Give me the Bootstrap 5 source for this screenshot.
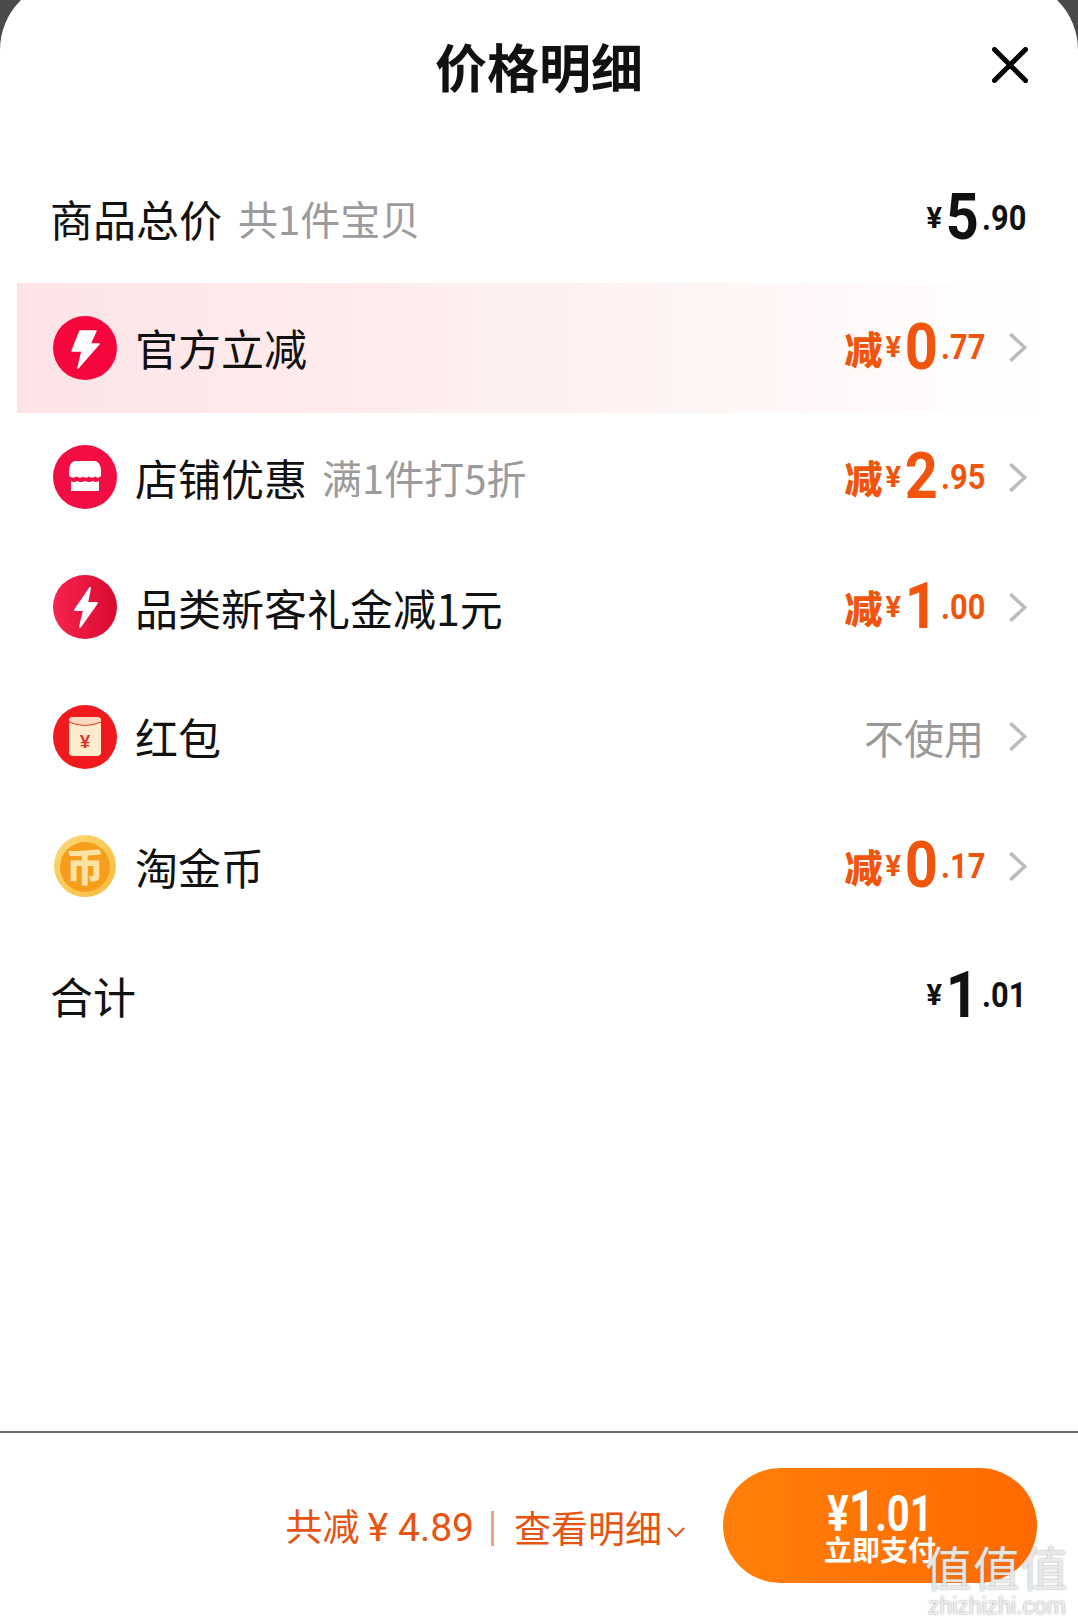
<!DOCTYPE html>
<html lang="zh-CN">
<head>
    <meta charset="UTF-8">
    <meta name="viewport" content="width=device-width, initial-scale=1.0">
    <title>价格明细</title>
    <link href="https://cdn.jsdelivr.net/npm/bootstrap@5.3.0/dist/css/bootstrap.min.css" rel="stylesheet">
    <script src="https://cdn.jsdelivr.net/npm/bootstrap@5.3.0/dist/js/bootstrap.bundle.min.js"></script>
    <style>
        html, body {
            height: 100%;
            overflow: hidden;
        }
        body {
            background-color: #4a4a4a;
            font-family: "Noto Sans CJK SC", "Liberation Sans", sans-serif;
            color: #111;
        }
        .sheet {
            position: relative;
            height: 1643px;
            margin-top: -20px;
            padding-top: 20px;
            background: #fff;
            border-radius: 70px 70px 0 0;
            overflow: hidden;
        }
        .sheet-head {
            height: 153.500px;
            padding: 40px 50px 0;
        }
        .sheet-title {
            font-size: 52px;
            font-weight: 700;
            line-height: 1;
            margin: 0;
        }
        .close-x {
            position: absolute;
            right: 50px;
            top: 67px;
            width: 36px;
            height: 36px;
        }
        .price-row {
            height: 129.600px;
            padding: 0 51px 0 53px;
            font-size: 43px;
            line-height: 1;
        }
        .price-row.is-hot {
            margin-left: 17px;
            padding-left: 36px;
            background: linear-gradient(90deg, #fde4e6 0%, #feeff0 45%, #fff7f7 72%, #fff 96%);
        }
        .price-row.is-plain {
            padding: 0 52px 0 50px;
        }
        .row-label { margin-left: 18px; }
        .row-note {
            color: #9b9b9b;
            font-size: 40px;
            margin-left: 15px;
        }
        .is-plain .row-note { margin-left: 16px; }
        .ico { width: 64px; height: 64px; flex: none; }
        .amt {
            font-family: Roboto, "Liberation Sans", sans-serif;
            font-weight: 700;
            line-height: 1;
            white-space: nowrap;
        }
        .amt-off { color: #f0540d; margin-right: 23px; }
        .amt-jian {
            font-family: "Noto Sans CJK SC", sans-serif;
            font-size: 38px;
            font-weight: 900;
            margin-right: 3px;
        }
        .amt-yen { font-size: 29px; margin-right: 3px; }
        .amt-big {
            display: inline-block;
            font-size: 64px;
            margin-left: -3px;
            transform: scaleX(.9);
            transform-origin: 100% 50%;
        }
        .amt-dec {
            display: inline-block;
            font-size: 35px;
            margin-left: -3px;
            transform: scaleX(.88);
            transform-origin: 100% 50%;
        }
        .no-use {
            color: #999;
            font-size: 40px;
            margin-right: 24px;
        }
        .chev { width: 19px; height: 33px; flex: none; }
        .sheet-foot {
            position: absolute;
            left: 0;
            right: 0;
            top: 1451px;
            height: 172px;
            border-top: 2px solid #6b6b6b;
            padding: 35px 41px 0 0;
            color: #e8530f;
            font-size: 37px;
        }
        .foot-sum {
            height: 115px;
            padding-top: 5px;
        }
        .foot-sep {
            width: 3px;
            height: 35px;
            background: #eea183;
            margin: 0 20px 0 17px;
        }
        .foot-num { font-family: Roboto, "Liberation Sans", sans-serif; font-weight: 400; font-size: 39px; }
        .foot-chev { width: 20px; height: 12px; margin: 8px 0 0 4px; }
        .pay-btn {
            width: 314px;
            height: 115px;
            margin-left: 37px;
            border: 0;
            border-radius: 58px;
            background: linear-gradient(90deg, #ff7f0a, #ff6a00);
            color: #fff;
            font-weight: 700;
            line-height: 1;
        }
        .pay-sum {
            font-family: Roboto, "Liberation Sans", sans-serif;
            font-size: 50px;
            font-weight: 700;
            transform: scaleX(.8);
        }
        .pay-sum b { font-size: 58px; font-weight: 700; }
        .pay-txt { font-size: 28px; margin-top: -5px; padding-bottom: 6px; }
        .wm {
            position: absolute;
            right: 9px;
            bottom: 5px;
            color: rgba(255, 255, 255, .8);
            text-align: center;
            line-height: 1;
            text-shadow: 0 0 2px #8a8a8a;
            pointer-events: none;
        }
        .wm-big { font-size: 47px; letter-spacing: 1px; font-weight: 400; }
        .wm-url { font-family: "Liberation Sans", sans-serif; font-size: 23px; margin-top: 6px; }
    </style>
</head>
<body>
    <div class="sheet">
        <div class="sheet-head d-flex align-items-start justify-content-center">
            <h1 class="sheet-title">价格明细</h1>
        </div>
        <svg class="close-x" viewBox="0 0 36 36"><path d="M2.500 2.500 33.500 33.500M33.500 2.500 2.500 33.500" stroke="#000" stroke-width="5" stroke-linecap="round"/></svg>

        <div class="price-row is-plain d-flex align-items-center">
            <span>商品总价</span>
            <span class="row-note">共1件宝贝</span>
            <span class="amt ms-auto d-flex align-items-center"><span class="amt-yen">¥</span><span class="amt-big">5</span><span class="amt-dec">.90</span></span>
        </div>

        <div class="price-row is-hot d-flex align-items-center">
            <svg class="ico" viewBox="0 0 64 64"><circle cx="32" cy="32" r="32" fill="#f5063d"/><path d="M27 15H43L37 28H46L25 52 29 35H19Z" fill="#fff" stroke="#fff" stroke-width="1.500" stroke-linejoin="round"/></svg>
            <span class="row-label">官方立减</span>
            <span class="amt amt-off ms-auto d-flex align-items-center"><span class="amt-jian">减</span><span class="amt-yen">¥</span><span class="amt-big">0</span><span class="amt-dec">.77</span></span>
            <svg class="chev" viewBox="0 0 18 32"><path d="M2 3 16 16 2 29" fill="none" stroke="#bcbcbc" stroke-width="3.400"/></svg>
        </div>

        <div class="price-row d-flex align-items-center">
            <svg class="ico" viewBox="0 0 64 64"><circle cx="32" cy="32" r="32" fill="#f20d42"/><path d="M22 16H42Q48 17 48 27V31Q45 34 42 31.500 39 34 36 31.500 33 34 30 31.500 27 34 24 31.500 20 34 16 31V27Q16 17 22 16Z" fill="#fff"/><path d="M18 36Q21 38 24 36 28 38 32 36 36 38 40 36 43 38 46 36V46H18Z" fill="#fff"/></svg>
            <span class="row-label">店铺优惠</span>
            <span class="row-note">满1件打5折</span>
            <span class="amt amt-off ms-auto d-flex align-items-center"><span class="amt-jian">减</span><span class="amt-yen">¥</span><span class="amt-big">2</span><span class="amt-dec">.95</span></span>
            <svg class="chev" viewBox="0 0 18 32"><path d="M2 3 16 16 2 29" fill="none" stroke="#bcbcbc" stroke-width="3.400"/></svg>
        </div>

        <div class="price-row d-flex align-items-center">
            <svg class="ico" viewBox="0 0 64 64"><defs><linearGradient id="boltBg" x1="0" x2="1" y1="0" y2="0"><stop offset="0" stop-color="#f52450"/><stop offset="1" stop-color="#d90a30"/></linearGradient></defs><circle cx="32" cy="32" r="32" fill="url(#boltBg)"/><path d="M37 13 22 35H31L27 52 44 28H34Z" fill="#fff" stroke="#fff" stroke-width="2" stroke-linejoin="round"/></svg>
            <span class="row-label">品类新客礼金减1元</span>
            <span class="amt amt-off ms-auto d-flex align-items-center"><span class="amt-jian">减</span><span class="amt-yen">¥</span><span class="amt-big">1</span><span class="amt-dec">.00</span></span>
            <svg class="chev" viewBox="0 0 18 32"><path d="M2 3 16 16 2 29" fill="none" stroke="#bcbcbc" stroke-width="3.400"/></svg>
        </div>

        <div class="price-row d-flex align-items-center">
            <svg class="ico" viewBox="0 0 64 64"><circle cx="32" cy="32" r="32" fill="#f01a1e"/><rect x="16" y="12" width="32" height="39" rx="4" fill="#fdeccb"/><path d="M16 16Q16 12 20 12H44Q48 12 48 16V17Q32 24 16 17Z" fill="#fbd9c0"/><path d="M16 17Q32 24 48 17" fill="none" stroke="#e2432f" stroke-width="1.200"/><text x="32" y="43" text-anchor="middle" font-size="19" font-weight="700" font-family="Liberation Sans" fill="#d9362c">¥</text></svg>
            <span class="row-label">红包</span>
            <span class="no-use ms-auto">不使用</span>
            <svg class="chev" viewBox="0 0 18 32"><path d="M2 3 16 16 2 29" fill="none" stroke="#bcbcbc" stroke-width="3.400"/></svg>
        </div>

        <div class="price-row d-flex align-items-center">
            <svg class="ico" viewBox="0 0 64 64"><defs><linearGradient id="coinRim" x1="0" x2="1" y1="0" y2="1"><stop offset="0" stop-color="#fbd977"/><stop offset="1" stop-color="#f9bb3c"/></linearGradient></defs><circle cx="32" cy="32" r="31" fill="url(#coinRim)"/><circle cx="32" cy="33" r="25" fill="#f69d1c"/><text x="32" y="47" text-anchor="middle" font-size="38" font-weight="900" font-family="Noto Sans CJK SC" fill="#fde2a6">币</text></svg>
            <span class="row-label">淘金币</span>
            <span class="amt amt-off ms-auto d-flex align-items-center"><span class="amt-jian">减</span><span class="amt-yen">¥</span><span class="amt-big">0</span><span class="amt-dec">.17</span></span>
            <svg class="chev" viewBox="0 0 18 32"><path d="M2 3 16 16 2 29" fill="none" stroke="#bcbcbc" stroke-width="3.400"/></svg>
        </div>

        <div class="price-row is-plain d-flex align-items-center">
            <span>合计</span>
            <span class="amt ms-auto d-flex align-items-center"><span class="amt-yen">¥</span><span class="amt-big">1</span><span class="amt-dec">.01</span></span>
        </div>

        <div class="sheet-foot d-flex justify-content-end align-items-start">
            <div class="foot-sum d-flex align-items-center">
                <span>共减 <span class="foot-num">¥ 4.89</span></span>
                <span class="foot-sep"></span>
                <span>查看明细</span>
                <svg class="foot-chev" viewBox="0 0 20 12"><path d="M2 2 10 10 18 2" fill="none" stroke="#e8530f" stroke-width="2"/></svg>
            </div>
            <button class="pay-btn d-flex flex-column align-items-center justify-content-center" type="button">
                <span class="pay-sum">¥<b>1</b>.01</span>
                <span class="pay-txt">立即支付</span>
            </button>
        </div>

        <div class="wm">
            <div class="wm-big">值值值</div>
            <div class="wm-url">zhizhizhi.com</div>
        </div>
    </div>
</body>
</html>
